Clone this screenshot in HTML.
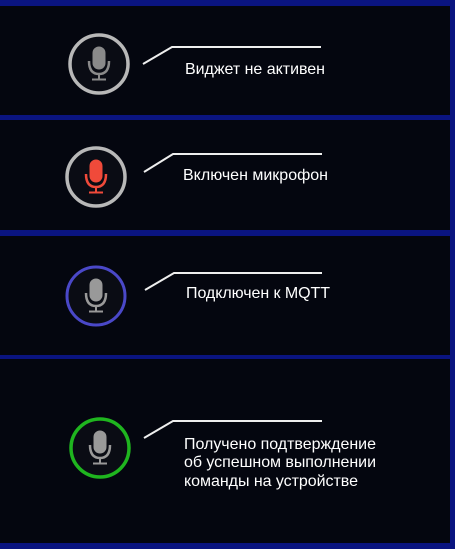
<!DOCTYPE html>
<html><head><meta charset="utf-8"><style>
html,body{margin:0;padding:0;background:#0a1480;width:455px;height:549px;overflow:hidden}
.p{position:absolute;left:0;width:450px;background:#04060f}
svg{position:absolute;left:0;top:0}
</style></head><body>
<div class="p" style="top:6px;height:109px"></div>
<div class="p" style="top:120px;height:110px"></div>
<div class="p" style="top:236px;height:119px"></div>
<div class="p" style="top:359px;height:184px"></div>
<svg width="455" height="549" font-family="Liberation Sans, sans-serif" font-size="16" fill="#fff">
<defs>
<g id="mic">
<rect x="-6" y="-17" width="12" height="22" rx="6"/>
<path d="M-10,-3 Q-10,10 0,10 Q10,10 10,-3" fill="none" stroke-width="2.5"/>
<path d="M0,10 V15 M-7,15.5 H7" fill="none" stroke-width="2"/>
</g>
</defs>
<g stroke="#eee" stroke-width="2" fill="none">
<path d="M143,64 L172,47 H321"/>
<path d="M144,172 L173,154 H322"/>
<path d="M145,290 L174,273 H322"/>
<path d="M144,438 L173,421 H322"/>
</g>
<circle cx="99" cy="64" r="29" fill="#0a0c14" stroke="#b8b8b8" stroke-width="3.5"/>
<use href="#mic" x="99" y="64" fill="#8a8a8a" stroke="#8a8a8a"/>
<circle cx="96" cy="177" r="29" fill="#0a0c14" stroke="#b8b8b8" stroke-width="3.5"/>
<use href="#mic" x="96" y="177" fill="#f04a3a" stroke="#f04a3a"/>
<circle cx="96" cy="296" r="29" fill="#0a0c14" stroke="#4a48c8" stroke-width="3"/>
<use href="#mic" x="96" y="296" fill="#999" stroke="#999"/>
<circle cx="100" cy="448" r="29" fill="#0a0c14" stroke="#1fb51f" stroke-width="3.5"/>
<use href="#mic" x="100" y="448" fill="#999" stroke="#999"/>
<text x="185" y="74" textLength="140">Виджет не активен</text>
<text x="183" y="180" textLength="145">Включен микрофон</text>
<text x="186" y="298" textLength="144">Подключен к MQTT</text>
<text x="184" y="449" textLength="192">Получено подтверждение</text>
<text x="184" y="467" textLength="192">об успешном выполнении</text>
<text x="184" y="486" textLength="174">команды на устройстве</text>
</svg>
</body></html>
